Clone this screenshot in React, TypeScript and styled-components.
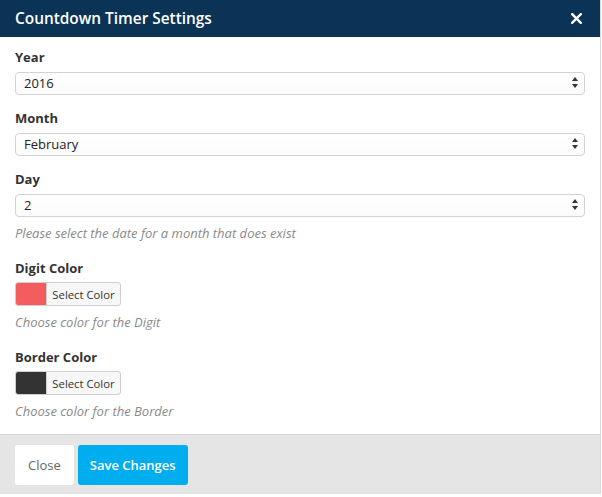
import React from "react";
import styled, { createGlobalStyle } from "styled-components";

const Global = createGlobalStyle`
  html, body { margin: 0; padding: 0; background: #ffffff; }
  body { font-family: "Open Sans", "Noto Sans", sans-serif; color: #333; }
  * { box-sizing: border-box; }
`;

const Page = styled.div`
  width: 602px;
  height: 497px;
  display: flex;
  align-items: flex-start;
  background: #ffffff;
`;

const Modal = styled.div`
  width: 601px;
  height: 494px;
  display: flex;
  flex-direction: column;
  background: #fff;
  border-right: 1px solid #d9d9d9;
`;

const Header = styled.div`
  height: 37px;
  flex: none;
  background: #0a3356;
  display: flex;
  align-items: center;
  justify-content: space-between;
  padding: 0 18px 0 15px;
`;

const Title = styled.h4`
  margin: 0;
  font-size: 15.4px;
  font-weight: 600;
  color: #fff;
`;

const CloseX = styled.button`
  border: 0;
  background: none;
  padding: 0;
  width: 11px;
  height: 11px;
  display: flex;
  cursor: pointer;
`;

const Body = styled.div`
  flex: 1;
  padding: 11px 15px 0 15px;
  display: flex;
  flex-direction: column;
`;

const Group = styled.div<{ $mb?: number }>`
  display: flex;
  flex-direction: column;
  margin-bottom: ${(p) => (p.$mb ?? 15)}px;
`;

const Label = styled.label`
  font-size: 13px;
  font-weight: 700;
  line-height: 18px;
  margin-bottom: 5px;
  color: #333;
`;

const SelectWrap = styled.div`
  position: relative;
  width: 570px;
  height: 23px;
`;

const Select = styled.select`
  appearance: none;
  -webkit-appearance: none;
  width: 100%;
  height: 23px;
  border: 1px solid #d3d3d3;
  border-radius: 4px;
  background: linear-gradient(#ffffff, #fbfbfb);
  font-family: "Open Sans", sans-serif;
  font-size: 13px;
  color: #222;
  padding: 0 0 0 8px;
  line-height: 21px;
  outline: none;
`;

const Arrows = styled.svg`
  position: absolute;
  right: 7px;
  top: 6px;
  width: 6px;
  height: 11px;
  pointer-events: none;
`;

const Help = styled.p<{ $mt?: number }>`
  margin: ${(p) => p.$mt ?? 8}px 0 0 0;
  font-size: 13px;
  line-height: 18px;
  font-style: italic;
  color: #8a8a8a;
`;

const ColorBtn = styled.button`
  display: flex;
  align-items: stretch;
  width: 106px;
  height: 24px;
  padding: 0;
  border: 1px solid #cfcfcf;
  border-radius: 3px;
  background: #f7f7f7;
  overflow: hidden;
  cursor: pointer;
`;

const Swatch = styled.span<{ $c: string }>`
  width: 31px;
  flex: none;
  background: ${(p) => p.$c};
  border-right: 1px solid #cfcfcf;
`;

const BtnText = styled.span`
  flex: 1;
  display: flex;
  align-items: center;
  justify-content: center;
  font-family: "Open Sans", sans-serif;
  font-size: 11.3px;
  color: #333;
`;

const Footer = styled.div`
  height: 60px;
  flex: none;
  background: #e5e5e5;
  border-top: 1px solid #d6d6d6;
  padding: 10px 15px 0 15px;
  display: flex;
  gap: 4px;
  align-items: flex-start;
`;

const FooterBtn = styled.button<{ $primary?: boolean }>`
  height: 40px;
  padding: 0 ${(p) => (p.$primary ? 12 : 13)}px;
  border: 0;
  border-radius: 3px;
  font-family: "Open Sans", sans-serif;
  font-size: 13px;
  font-weight: ${(p) => (p.$primary ? 600 : 400)};
  background: ${(p) => (p.$primary ? "#00adee" : "#ffffff")};
  color: ${(p) => (p.$primary ? "#ffffff" : "#666666")};
  cursor: pointer;
`;

const SelectField = ({ label, value }: { label: string; value: string }) => (
  <>
    <Label>{label}</Label>
    <SelectWrap>
      <Select defaultValue={value}>
        <option>{value}</option>
      </Select>
      <Arrows viewBox="0 0 6 11">
        <path d="M3 0 L6 4 L0 4 Z" fill="#333" />
        <path d="M0 7 L6 7 L3 11 Z" fill="#333" />
      </Arrows>
    </SelectWrap>
  </>
);

const ColorField = ({ label, color, help }: { label: string; color: string; help: string }) => (
  <>
    <Label>{label}</Label>
    <ColorBtn>
      <Swatch $c={color} />
      <BtnText>Select Color</BtnText>
    </ColorBtn>
    <Help $mt={7}>{help}</Help>
  </>
);

export default function App() {
  return (
    <Page>
      <Global />
      <Modal>
        <Header>
          <Title>Countdown Timer Settings</Title>
          <CloseX aria-label="Close">
            <svg width="11" height="11" viewBox="0 0 11 11">
              <path d="M1.2 1.2 L9.8 9.8 M9.8 1.2 L1.2 9.8" stroke="#fff" strokeWidth="2.4" strokeLinecap="square" />
            </svg>
          </CloseX>
        </Header>
        <Body>
          <Group>
            <SelectField label="Year" value="2016" />
          </Group>
          <Group>
            <SelectField label="Month" value="February" />
          </Group>
          <Group $mb={17}>
            <SelectField label="Day" value="2" />
            <Help>Please select the date for a month that does exist</Help>
          </Group>
          <Group $mb={17}>
            <ColorField label="Digit Color" color="#f45d5f" help="Choose color for the Digit" />
          </Group>
          <Group $mb={0}>
            <ColorField label="Border Color" color="#333333" help="Choose color for the Border" />
          </Group>
        </Body>
        <Footer>
          <FooterBtn>Close</FooterBtn>
          <FooterBtn $primary>Save Changes</FooterBtn>
        </Footer>
      </Modal>
    </Page>
  );
}
